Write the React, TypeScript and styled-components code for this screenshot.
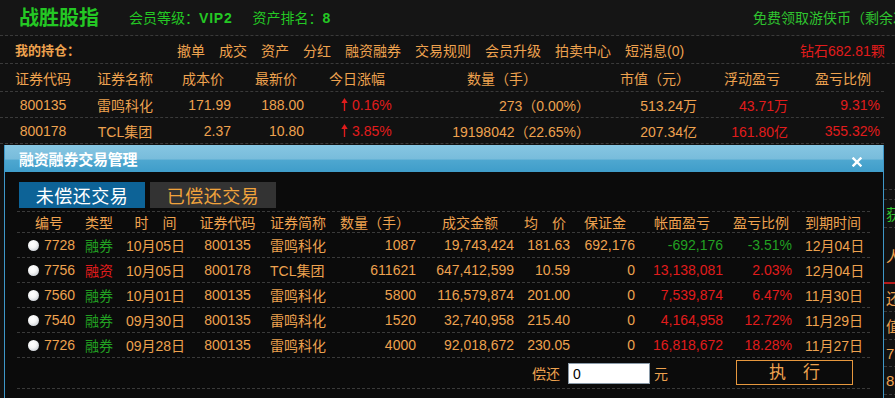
import React from 'react';
import styled, { createGlobalStyle } from 'styled-components';

const ORANGE = '#eea24f';
const RED = '#e11c1c';
const GREEN = '#22a022';
const BRIGHT_GREEN = '#24c824';
const LINE = '1px dashed #3a3a3a';
const FONT = '"Liberation Sans", "Noto Sans CJK SC", sans-serif';

const GlobalStyle = createGlobalStyle`
  html, body { margin: 0; padding: 0; background: #111; overflow: hidden; }
  * { box-sizing: border-box; }
  body { font-family: ${FONT}; font-size: 14px; color: ${ORANGE}; }
`;

const Page = styled.div`
  position: relative;
  width: 1100px;
  height: 398px;
  overflow: hidden;
  background: #111;
`;

const TopBar = styled.header`
  display: grid;
  grid-template-columns: 753px 1fr;
  align-items: center;
  height: 36px;
  border-bottom: ${LINE};
  background: #151515;
`;

const Brand = styled.div`
  display: flex;
  align-items: center;
  padding-left: 19px;
  padding-bottom: 2px;
`;

const Logo = styled.span`
  font-size: 20px;
  font-weight: bold;
  color: ${BRIGHT_GREEN};
  margin-right: 30px;
`;

const Info = styled.span`
  font-size: 14px;
  color: ${BRIGHT_GREEN};
  margin-right: 20px;
  b { font-weight: bold; letter-spacing: 0.8px; }
`;

const Promo = styled.span`
  font-size: 14px;
  color: #2fc42f;
  white-space: nowrap;
  padding-bottom: 2px;
`;

const NavBar = styled.nav`
  display: grid;
  grid-template-columns: 177px 623px auto;
  align-items: center;
  height: 28px;
  border-bottom: ${LINE};
`;

const Holdings = styled.span`
  padding-left: 15px;
  font-size: 13px;
  font-weight: bold;
  color: ${ORANGE};
`;

const NavLinks = styled.div`
  display: flex;
  gap: 14px;
  white-space: nowrap;
`;

const NavLink = styled.span`
  color: ${ORANGE};
`;

const Diamond = styled.span`
  color: ${RED};
  white-space: nowrap;
`;

const MAIN_COLS = '86px 78px 72px 72px 90px 200px 104px 90px 92px';

const MainRow = styled.div<{ $h: number }>`
  display: grid;
  grid-template-columns: ${MAIN_COLS};
  align-items: center;
  height: ${(p) => p.$h}px;
  border-bottom: ${LINE};
  width: 884px;
`;

type Align = 'left' | 'center' | 'right';

const Cell = styled.div<{ $align: Align; $pad?: number; $color?: string }>`
  display: flex;
  align-items: center;
  justify-content: ${(p) =>
    p.$align === 'left' ? 'flex-start' : p.$align === 'right' ? 'flex-end' : 'center'};
  padding-left: ${(p) => (p.$align === 'left' ? p.$pad ?? 0 : 0)}px;
  padding-right: ${(p) => (p.$align === 'right' ? p.$pad ?? 0 : 0)}px;
  color: ${(p) => p.$color ?? ORANGE};
  white-space: nowrap;
  min-width: 0;
`;

const UpArrow = styled.svg`
  width: 7px;
  height: 13px;
  margin-right: 4px;
  flex: none;
`;

const Arrow = () => (
  <UpArrow viewBox="0 0 7 13">
    <line x1="3.5" y1="3" x2="3.5" y2="13" stroke={RED} strokeWidth="1.4" />
    <polygon points="0.3,5 3.5,0 6.7,5" fill={RED} />
  </UpArrow>
);

/* ---------- lower part of page (mostly behind dialog) ---------- */
const Lower = styled.div`
  display: flex;
`;

const LowerMain = styled.div`
  width: 884px;
  flex: none;
`;

const Side = styled.div`
  width: 200px;
  display: flex;
  flex-direction: column;
`;

const SideRow = styled.div<{ $h: number; $red?: boolean; $color?: string }>`
  height: ${(p) => p.$h}px;
  display: flex;
  align-items: center;
  padding-left: 2px;
  border-bottom: ${(p) => (p.$red ? '2px solid #b51a1a' : LINE)};
  color: ${(p) => p.$color ?? ORANGE};
  font-size: 15px;
  white-space: nowrap;
`;

/* ---------- dialog ---------- */
const Dialog = styled.section`
  position: absolute;
  left: 4px;
  top: 145px;
  width: 880px;
  height: 270px;
  background: #0b0b0b;
  border-left: 1px solid #3e97c8;
  border-right: 1px solid #3e97c8;
`;

const TitleBar = styled.div`
  display: flex;
  align-items: center;
  justify-content: space-between;
  height: 27px;
  padding: 0 21px 0 14px;
  background: linear-gradient(
    to bottom,
    #86c6e2 0%,
    #78bcdb 52%,
    #4ea7d0 56%,
    #3f9dca 100%
  );
`;

const Title = styled.span`
  color: #fff;
  font-size: 15px;
  font-weight: bold;
  letter-spacing: -0.2px;
`;

const CloseIcon = styled.svg`
  width: 10px;
  height: 10px;
  margin-top: 7px;
`;

const Body = styled.div`
  padding: 10px 0 0 12px;
`;

const Tabs = styled.div`
  display: flex;
  gap: 5px;
  margin-left: 2px;
  height: 26px;
`;

const Tab = styled.div<{ $active?: boolean }>`
  width: 126px;
  height: 26px;
  display: flex;
  align-items: center;
  justify-content: center;
  font-size: 18px;
  letter-spacing: 0.5px;
  background: ${(p) => (p.$active ? '#0d6397' : '#333')};
  color: ${(p) => (p.$active ? '#fff' : '#f0a33c')};
`;

const Table = styled.div`
  margin-top: 3px;
  width: 853px;
  border-top: ${LINE};
`;

const DLG_COLS = '63px 40px 71px 73px 71px 85px 98px 57px 65px 88px 69px 73px';

const DRow = styled.div<{ $h: number }>`
  display: grid;
  grid-template-columns: ${DLG_COLS};
  align-items: center;
  height: ${(p) => p.$h}px;
  border-bottom: ${LINE};
`;

const Radio = styled.span`
  width: 11px;
  height: 11px;
  border-radius: 50%;
  margin-right: 5px;
  flex: none;
  background: radial-gradient(circle at 40% 35%, #fff 0%, #f6f6f6 40%, #cfd3d8 75%, #8f959c 100%);
`;

const Footer = styled.div`
  display: flex;
  align-items: center;
  height: 31px;
  padding-left: 515px;
  padding-right: 17px;
  border-bottom: ${LINE};
`;

const Label = styled.span`
  color: ${ORANGE};
  font-size: 14px;
`;

const AmountInput = styled.input`
  width: 82px;
  height: 21px;
  margin: 1px 4px 0 8px;
  padding: 0 4px;
  border: 1px solid #8a9aa8;
  background: #fff;
  color: #000;
  font-family: ${FONT};
  font-size: 14px;
  outline: none;
`;

const ExecButton = styled.button`
  margin-left: auto;
  width: 117px;
  height: 25px;
  margin-top: -2px;
  background: transparent;
  border: 1px solid #e7983e;
  color: ${ORANGE};
  font-family: ${FONT};
  font-size: 17px;
  line-height: 1;
  padding: 0;
`;

type HeadDef = { t: string; a: Align; p?: number };
const mainHead: HeadDef[] = [
  { t: '证券代码', a: 'center' },
  { t: '证券名称', a: 'center' },
  { t: '成本价', a: 'left', p: 18 },
  { t: '最新价', a: 'left', p: 19 },
  { t: '今日涨幅', a: 'left', p: 21 },
  { t: '数量（手）', a: 'left', p: 69 },
  { t: '市值（元）', a: 'left', p: 22 },
  { t: '浮动盈亏', a: 'left', p: 22 },
  { t: '盈亏比例', a: 'left', p: 23 },
];

const holdings = [
  ['800135', '雷鸣科化', '171.99', '188.00', '0.16%', '273（0.00%）', '513.24万', '43.71万', '9.31%'],
  ['800178', 'TCL集团', '2.37', '10.80', '3.85%', '19198042（22.65%）', '207.34亿', '161.80亿', '355.32%'],
];

const dlgHead: HeadDef[] = [
  { t: '编号', a: 'left', p: 18 },
  { t: '类型', a: 'left', p: 5 },
  { t: '时　间', a: 'center' },
  { t: '证券代码', a: 'center' },
  { t: '证券简称', a: 'left', p: 6 },
  { t: '数量（手）', a: 'left', p: 5 },
  { t: '成交金额', a: 'left', p: 22 },
  { t: '均　价', a: 'left', p: 6 },
  { t: '保证金', a: 'left', p: 9 },
  { t: '帐面盈亏', a: 'left', p: 14 },
  { t: '盈亏比例', a: 'left', p: 5 },
  { t: '到期时间', a: 'left', p: 8 },
];

type Trade = {
  id: string;
  type: string;
  date: string;
  code: string;
  name: string;
  qty: string;
  amount: string;
  avg: string;
  margin: string;
  pnl: string;
  ratio: string;
  due: string;
  loss?: boolean;
};

const trades: Trade[] = [
  { id: '7728', type: '融券', date: '10月05日', code: '800135', name: '雷鸣科化', qty: '1087', amount: '19,743,424', avg: '181.63', margin: '692,176', pnl: '-692,176', ratio: '-3.51%', due: '12月04日', loss: true },
  { id: '7756', type: '融资', date: '10月05日', code: '800178', name: 'TCL集团', qty: '611621', amount: '647,412,599', avg: '10.59', margin: '0', pnl: '13,138,081', ratio: '2.03%', due: '12月04日' },
  { id: '7560', type: '融券', date: '10月01日', code: '800135', name: '雷鸣科化', qty: '5800', amount: '116,579,874', avg: '201.00', margin: '0', pnl: '7,539,874', ratio: '6.47%', due: '11月30日' },
  { id: '7540', type: '融券', date: '09月30日', code: '800135', name: '雷鸣科化', qty: '1520', amount: '32,740,958', avg: '215.40', margin: '0', pnl: '4,164,958', ratio: '12.72%', due: '11月29日' },
  { id: '7726', type: '融券', date: '09月28日', code: '800135', name: '雷鸣科化', qty: '4000', amount: '92,018,672', avg: '230.05', margin: '0', pnl: '16,818,672', ratio: '18.28%', due: '11月27日' },
];

const navItems = ['撤单', '成交', '资产', '分红', '融资融券', '交易规则', '会员升级', '拍卖中心', '短消息(0)'];

export default function App() {
  return (
    <Page>
      <GlobalStyle />
      <TopBar>
        <Brand>
          <Logo>战胜股指</Logo>
          <Info>
            会员等级：<b>VIP2</b>
          </Info>
          <Info>
            资产排名：<b>8</b>
          </Info>
        </Brand>
        <Promo>免费领取游侠币（剩余次数：3次）</Promo>
      </TopBar>

      <NavBar>
        <Holdings>我的持仓：</Holdings>
        <NavLinks>
          {navItems.map((n) => (
            <NavLink key={n}>{n}</NavLink>
          ))}
        </NavLinks>
        <Diamond>钻石682.81颗</Diamond>
      </NavBar>

      <MainRow $h={28}>
        {mainHead.map((h) => (
          <Cell key={h.t} $align={h.a} $pad={h.p}>
            {h.t}
          </Cell>
        ))}
      </MainRow>
      {holdings.map((r) => (
        <MainRow key={r[0]} $h={26}>
          <Cell $align="center">{r[0]}</Cell>
          <Cell $align="center">{r[1]}</Cell>
          <Cell $align="right" $pad={5}>{r[2]}</Cell>
          <Cell $align="right" $pad={4}>{r[3]}</Cell>
          <Cell $align="left" $pad={33} $color={RED}>
            <Arrow />
            {r[4]}
          </Cell>
          <Cell $align="right" $pad={8}>{r[5]}</Cell>
          <Cell $align="right" $pad={5}>{r[6]}</Cell>
          <Cell $align="right" $pad={4} $color={RED}>{r[7]}</Cell>
          <Cell $align="right" $pad={4} $color={RED}>{r[8]}</Cell>
        </MainRow>
      ))}

      <Lower>
        <LowerMain />
        <Side>
          <SideRow $h={46} />
          <SideRow $h={10} />
          <SideRow $h={28} $color="#2fc42f">获奖记录</SideRow>
          <SideRow $h={56} $red>人数</SideRow>
          <SideRow $h={28}>还款</SideRow>
          <SideRow $h={28}>值</SideRow>
          <SideRow $h={27}>79</SideRow>
          <SideRow $h={28}>82</SideRow>
        </Side>
      </Lower>

      <Dialog>
        <TitleBar>
          <Title>融资融券交易管理</Title>
          <CloseIcon viewBox="0 0 10 10">
            <path d="M1.5 1.5 L8.5 8.5 M8.5 1.5 L1.5 8.5" stroke="#fff" strokeWidth="2.4" strokeLinecap="square" />
          </CloseIcon>
        </TitleBar>
        <Body>
          <Tabs>
            <Tab $active>未偿还交易</Tab>
            <Tab>已偿还交易</Tab>
          </Tabs>
          <Table>
            <DRow $h={21}>
              {dlgHead.map((h) => (
                <Cell key={h.t} $align={h.a} $pad={h.p}>
                  {h.t}
                </Cell>
              ))}
            </DRow>
            {trades.map((t) => {
              const pnlColor = t.loss ? GREEN : RED;
              return (
                <DRow key={t.id} $h={25}>
                  <Cell $align="left" $pad={11}>
                    <Radio />
                    {t.id}
                  </Cell>
                  <Cell $align="left" $pad={5} $color={t.type === '融资' ? RED : GREEN}>
                    {t.type}
                  </Cell>
                  <Cell $align="center">{t.date}</Cell>
                  <Cell $align="center">{t.code}</Cell>
                  <Cell $align="left" $pad={6}>{t.name}</Cell>
                  <Cell $align="right" $pad={4}>{t.qty}</Cell>
                  <Cell $align="right" $pad={4}>{t.amount}</Cell>
                  <Cell $align="right" $pad={5}>{t.avg}</Cell>
                  <Cell $align="right" $pad={5}>{t.margin}</Cell>
                  <Cell $align="right" $pad={5} $color={pnlColor}>{t.pnl}</Cell>
                  <Cell $align="right" $pad={5} $color={pnlColor}>{t.ratio}</Cell>
                  <Cell $align="left" $pad={8}>{t.due}</Cell>
                </DRow>
              );
            })}
            <Footer>
              <Label>偿还</Label>
              <AmountInput defaultValue="0" />
              <Label>元</Label>
              <ExecButton>执　行</ExecButton>
            </Footer>
          </Table>
        </Body>
      </Dialog>
    </Page>
  );
}
